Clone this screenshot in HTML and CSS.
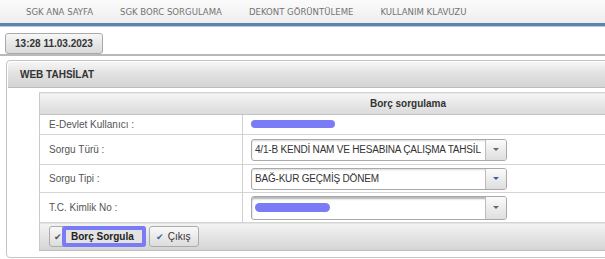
FILE: index.html
```html
<!DOCTYPE html>
<html lang="tr">
<head>
    <meta charset="UTF-8">
    <meta name="viewport" content="width=device-width, initial-scale=1.0">
    <title>Web Tahsilat</title>
    <link rel="stylesheet" href="styles.css">
</head>
<body>
    <div class="topnav">
        <a href="#">SGK ANA SAYFA</a>
        <a href="#">SGK BORC SORGULAMA</a>
        <a href="#">DEKONT GÖRÜNTÜLEME</a>
        <a href="#">KULLANIM KLAVUZU</a>
    </div>

    <div class="toolbar">
        <span class="clock">13:28 11.03.2023</span>
    </div>

    <div class="panel">
        <div class="panel-title">WEB TAHSİLAT</div>
        <div class="panel-body">
            <table class="query">
                <tr class="head">
                    <th colspan="2">Borç sorgulama</th>
                </tr>
                <tr class="row-user">
                    <td class="lbl">E-Devlet Kullanıcı :</td>
                    <td><span class="masked masked-user"></span></td>
                </tr>
                <tr class="row-select">
                    <td class="lbl">Sorgu Türü :</td>
                    <td>
                        <div class="combo">
                            <span class="combo-text">4/1-B KENDİ NAM VE HESABINA ÇALIŞMA TAHSİL</span>
                            <span class="combo-arrow"><i></i></span>
                        </div>
                    </td>
                </tr>
                <tr class="row-select row-short">
                    <td class="lbl">Sorgu Tipi :</td>
                    <td>
                        <div class="combo">
                            <span class="combo-text">BAĞ-KUR GEÇMİŞ DÖNEM</span>
                            <span class="combo-arrow blue"><i></i></span>
                        </div>
                    </td>
                </tr>
                <tr class="row-select">
                    <td class="lbl">T.C. Kimlik No :</td>
                    <td>
                        <div class="combo combo-deep">
                            <span class="combo-text"><span class="masked masked-tc"></span></span>
                            <span class="combo-arrow"><i></i></span>
                        </div>
                    </td>
                </tr>
                <tr class="actions">
                    <td colspan="2">
                        <div class="buttons">
                            <button type="button" class="btn btn-main">
                                <span class="tick">&#10004;</span>
                                <span class="marked">Borç Sorgula</span>
                            </button>
                            <button type="button" class="btn">
                                <span class="tick blue">&#10004;</span>
                                <span>Çıkış</span>
                            </button>
                        </div>
                    </td>
                </tr>
            </table>
        </div>
    </div>
</body>
</html>
```

FILE: styles.css
```css
html, body {
    overflow: hidden;
}

body {
    margin: 0;
    font-family: "Liberation Sans", Arial, sans-serif;
    font-size: 10px;
    color: #333;
    background: #fff;
}

.topnav {
    height: 23px;
    display: flex;
    align-items: center;
    gap: 27px;
    padding-left: 26px;
    background: linear-gradient(#fbfbfb, #eeeeee);
    border-bottom: 3px solid #5a83ad;
    box-shadow: 0 1px 0 #b7c9dc;
}

.topnav a {
    font-family: "DejaVu Sans Condensed", "Liberation Sans", sans-serif;
    font-stretch: condensed;
    font-size: 9.5px;
    color: #737373;
    text-decoration: none;
}

.toolbar {
    display: flex;
    padding: 7px 0 0 5px;
    border-bottom: 2px solid #b9b9b9;
}

.clock {
    width: 96px;
    height: 19px;
    line-height: 19px;
    text-align: center;
    font-weight: bold;
    color: #333;
    border: 1px solid #a9a9a9;
    border-radius: 3px;
    background: linear-gradient(#f7f7f7, #d9d9d9);
}

.panel {
    margin: 4px 0 0 6px;
    width: 820px;
    border: 1px solid #c4c4c4;
    border-radius: 4px;
}

.panel-title {
    height: 25px;
    line-height: 25px;
    padding-left: 12px;
    font-size: 10px;
    font-weight: bold;
    color: #333;
    margin: 1px;
    border-radius: 3px 3px 0 0;
    border-bottom: 1px solid #bdbdbd;
    background: linear-gradient(#f6f6f6, #e4e4e4 40%, #d3d3d3);
}

.panel-body {
    padding: 3px 0 6px 32px;
}

.query {
    width: 738px;
    border-collapse: collapse;
    border: 1px solid #c9c9c9;
}

.query td, .query th {
    padding: 0;
    border-top: 1px solid #d4d4d4;
}

.query .head th {
    height: 21px;
    font-weight: bold;
    color: #333;
    background: linear-gradient(#f5f5f5, #dadada);
    border-bottom: 1px solid #c4c4c4;
}

.query .lbl {
    width: 193px;
    padding-left: 9px;
    color: #555;
    border-right: 1px solid #d0d0d0;
}

.row-user td {
    height: 19px;
}

.row-select td {
    height: 29px;
}

.row-short td {
    height: 27px;
}

.row-select td + td, .row-user td + td {
    padding-left: 8px;
}

.masked {
    display: inline-block;
    border-radius: 5px;
    background: #7b7bf6;
    filter: blur(0.6px);
}

.masked-user {
    width: 84px;
    height: 8px;
    margin-top: 1px;
}

.masked-tc {
    width: 75px;
    height: 9px;
    vertical-align: middle;
}

.combo {
    display: flex;
    width: 254px;
    height: 20px;
    border: 1px solid #a9a9a9;
    border-radius: 3px;
    background: #fff;
    box-shadow: inset 0 1px 2px rgba(0, 0, 0, 0.15);
}

.combo-deep {
    height: 22px;
    box-shadow: inset 0 2px 2px rgba(0, 0, 0, 0.3);
}

.combo-text {
    flex: 1;
    display: flex;
    align-items: center;
    padding-left: 3px;
    font-size: 10px;
    letter-spacing: -0.2px;
    color: #333;
    white-space: nowrap;
    overflow: hidden;
}

.combo-arrow {
    width: 20px;
    display: flex;
    align-items: center;
    justify-content: center;
    border-left: 1px solid #bcbcbc;
    border-radius: 0 2px 2px 0;
    background: linear-gradient(#fbfbfb, #dedede);
}

.combo-arrow i {
    width: 0;
    height: 0;
    border-left: 3px solid transparent;
    border-right: 3px solid transparent;
    border-top: 3px solid #666;
}

.combo-arrow.blue i {
    border-top-color: #3d5f96;
}

.actions td {
    height: 27px;
    background: linear-gradient(#f3f3f3, #d4d4d4);
    border-bottom: 1px solid #bdbdbd;
}

.buttons {
    display: flex;
    gap: 3px;
    padding-left: 9px;
}

.btn {
    display: flex;
    align-items: center;
    gap: 4px;
    height: 21px;
    padding: 0 7px 0 6px;
    font-family: inherit;
    font-size: 10px;
    color: #333;
    border: 1px solid #ababab;
    border-radius: 3px;
    background: linear-gradient(#f9f9f9, #dcdcdc);
}

.btn-main {
    padding: 0 0 0 4px;
    gap: 0;
    align-items: stretch;
}

.tick {
    display: flex;
    align-items: center;
    font-size: 9px;
    color: #555;
}

.tick.blue {
    color: #3d6aa3;
}

.marked {
    display: flex;
    align-items: center;
    margin: -1px -1px -1px 0;
    padding: 0 8px 0 5px;
    font-weight: bold;
    color: #222;
    background: #e3e3e3;
    border: 4px solid #7b7bf6;
    border-radius: 3px;
}
```
